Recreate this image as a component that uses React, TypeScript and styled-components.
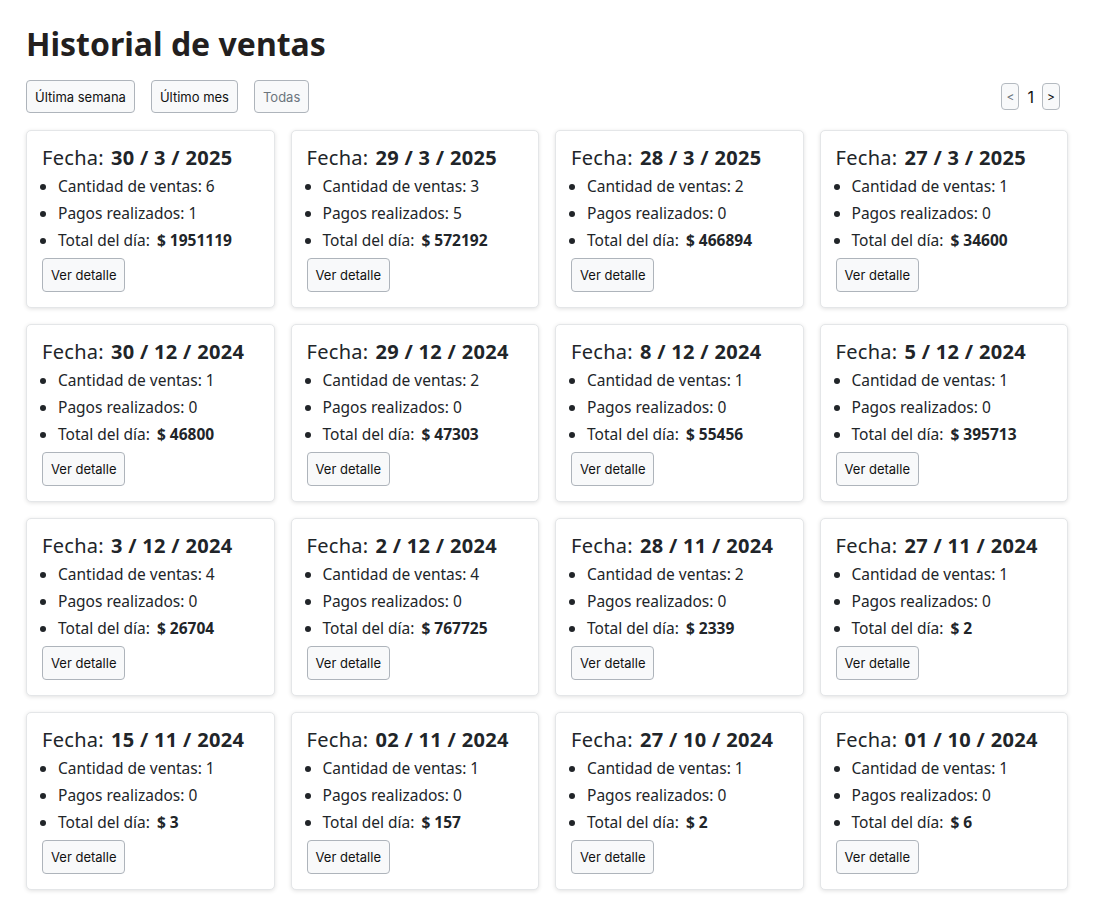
import React from "react";
import styled, { createGlobalStyle } from "styled-components";

const Global = createGlobalStyle`
  html, body { margin: 0; padding: 0; background: #fff; }
  body { font-family: "Inter", "Noto Sans", sans-serif; color: #212529; }
  * { box-sizing: border-box; }
`;

const Page = styled.div`
  padding: 23px 25px 20px 26px;
`;

const Title = styled.h1`
  margin: 0 0 15px 0;
  font-family: "Noto Sans", "Inter", sans-serif;
  font-weight: 700;
  font-size: 32px;
  line-height: 42px;
  color: #231f1f;
`;

const Toolbar = styled.div`
  display: flex;
  align-items: center;
  gap: 16px;
  margin-bottom: 17px;
`;

const Spacer = styled.div`
  flex: 1;
`;

const FilterButton = styled.button<{ $disabled?: boolean }>`
  height: 33px;
  padding: 0 8px;
  border: 1px solid #aeb4bb;
  border-radius: 4px;
  background: #f8f9fa;
  font-family: "Inter", sans-serif;
  font-size: 13px;
  color: ${(p) => (p.$disabled ? "#6c757d" : "#111")};
  cursor: pointer;
`;

const Pager = styled.div`
  display: flex;
  align-items: center;
  gap: 6px;
  margin-right: 8px;
`;

const PagerButton = styled.button<{ $muted?: boolean }>`
  width: 18px;
  height: 27px;
  padding: 0;
  border: 1px solid #b4bac0;
  border-radius: 4px;
  background: #f8f9fa;
  font-family: "Inter", sans-serif;
  font-size: 12px;
  color: ${(p) => (p.$muted ? "#6c757d" : "#111")};
`;

const PageNum = styled.span`
  font-family: "Inter", sans-serif;
  font-size: 16px;
  color: #111;
  padding: 0 2px;
`;

const Grid = styled.div`
  display: grid;
  grid-template-columns: repeat(4, 1fr);
  gap: 16px;
`;

const Card = styled.div`
  border: 1px solid #e4e6e8;
  border-radius: 5px;
  box-shadow: 0 1px 4px rgba(0, 0, 0, 0.12);
  padding: 15px 15px 15px 15px;
  background: #fff;
  font-family: "Noto Sans", "Inter", sans-serif;
`;

const CardTitle = styled.div`
  display: flex;
  gap: 7px;
  font-size: 20px;
  letter-spacing: 0.3px;
  line-height: 23px;
  color: #212529;
`;

const Strong = styled.span`
  font-weight: 700;
`;

const List = styled.ul`
  margin: 4px 0 4px 0;
  padding-left: 16px;
`;

const Item = styled.li`
  font-size: 15.5px;
  line-height: 27px;
  color: #212529;
`;

const Amount = styled.span`
  font-weight: 700;
  margin-left: 7px;
`;

const DetailButton = styled.button`
  height: 34px;
  padding: 0 8px;
  border: 1px solid #aeb4bb;
  border-radius: 4px;
  background: #f8f9fa;
  font-family: "Inter", sans-serif;
  font-size: 13px;
  color: #111;
`;

const data: [string, number, number, string][] = [
  ["30 / 3 / 2025", 6, 1, "1951119"],
  ["29 / 3 / 2025", 3, 5, "572192"],
  ["28 / 3 / 2025", 2, 0, "466894"],
  ["27 / 3 / 2025", 1, 0, "34600"],
  ["30 / 12 / 2024", 1, 0, "46800"],
  ["29 / 12 / 2024", 2, 0, "47303"],
  ["8 / 12 / 2024", 1, 0, "55456"],
  ["5 / 12 / 2024", 1, 0, "395713"],
  ["3 / 12 / 2024", 4, 0, "26704"],
  ["2 / 12 / 2024", 4, 0, "767725"],
  ["28 / 11 / 2024", 2, 0, "2339"],
  ["27 / 11 / 2024", 1, 0, "2"],
  ["15 / 11 / 2024", 1, 0, "3"],
  ["02 / 11 / 2024", 1, 0, "157"],
  ["27 / 10 / 2024", 1, 0, "2"],
  ["01 / 10 / 2024", 1, 0, "6"],
];

export default function App() {
  return (
    <Page>
      <Global />
      <Title>Historial de ventas</Title>
      <Toolbar>
        <FilterButton>Última semana</FilterButton>
        <FilterButton>Último mes</FilterButton>
        <FilterButton $disabled>Todas</FilterButton>
        <Spacer />
        <Pager>
          <PagerButton $muted>&lt;</PagerButton>
          <PageNum>1</PageNum>
          <PagerButton>&gt;</PagerButton>
        </Pager>
      </Toolbar>
      <Grid>
        {data.map(([date, ventas, pagos, total]) => (
          <Card key={date}>
            <CardTitle>
              <span>Fecha:</span>
              <Strong>{date}</Strong>
            </CardTitle>
            <List>
              <Item>Cantidad de ventas: {ventas}</Item>
              <Item>Pagos realizados: {pagos}</Item>
              <Item>
                Total del día:<Amount>$ {total}</Amount>
              </Item>
            </List>
            <DetailButton>Ver detalle</DetailButton>
          </Card>
        ))}
      </Grid>
    </Page>
  );
}
